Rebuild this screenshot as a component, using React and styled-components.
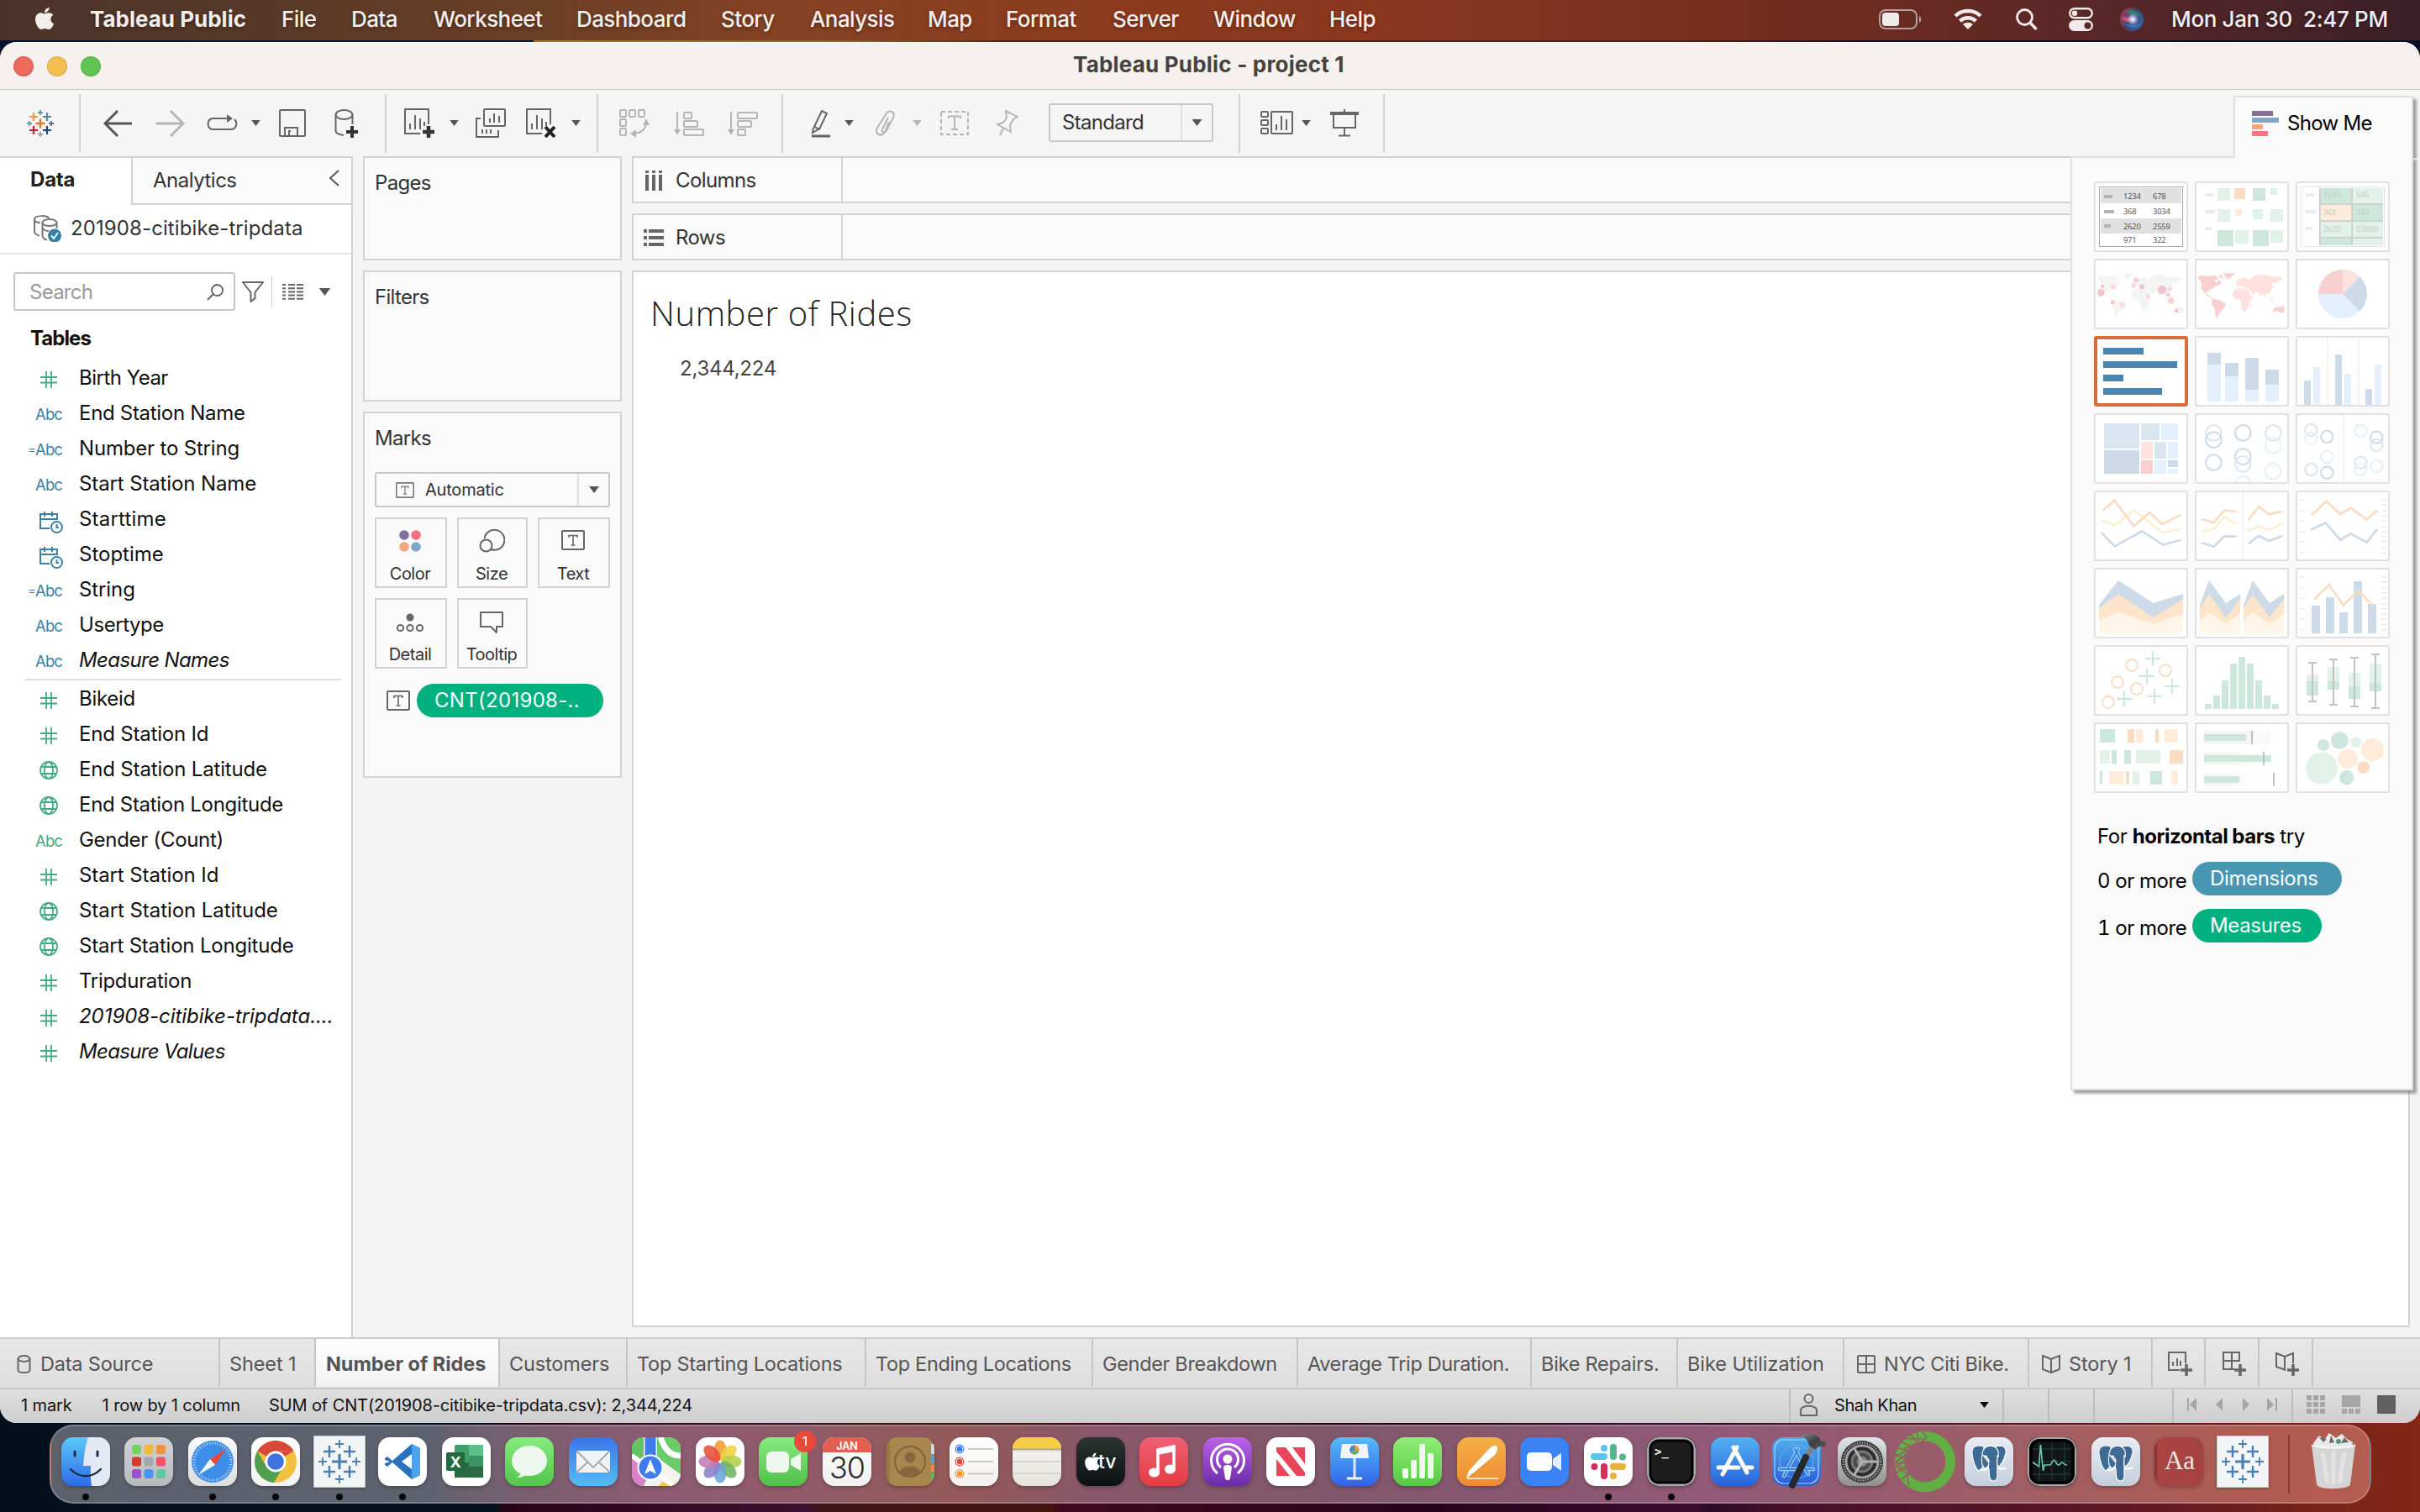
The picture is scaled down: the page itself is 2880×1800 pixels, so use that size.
import React from "react";
import styled, { createGlobalStyle, css } from "styled-components";
import { FaApple } from "react-icons/fa";

const ink = "#333";
const line = "#d3d3d3";
const iconGrey = "#666";
const dimGrey = "#b5b5b5";
const dimension = "#3b83a6";
const measure = "#45ab83";

const GlobalStyle = createGlobalStyle`
  * { box-sizing: border-box; }
  html, body { margin: 0; padding: 0; overflow: hidden; }
  body { font-family: Inter, "Liberation Sans", sans-serif; font-size: 24px; line-height: 30px; letter-spacing: -0.3px; color: ${ink}; }
  svg { display: block; flex: none; }
`;

const Desktop = styled.div`
  width: 2880px;
  height: 1800px;
  display: flex;
  flex-direction: column;
  background:
    linear-gradient(90deg, #04122b 0, #04122b 634px, #a8721c 636px, #9a5f1c 1000px, #5c1a10 1200px, #5c1a10 2000px, #0c0a1c 2250px, #0a1024 2880px) 0 0 / 100% 80px no-repeat,
    linear-gradient(90deg, #02101c 0, #03121c 590px, #280416 600px, #3c1030 960px, #3f1515 980px, #44150f 1250px, #40081c 1262px, #26041a 1700px, #3c0c30 2020px, #2c0a24 2035px, #48102a 2125px, #561526 2450px, #842815 2880px);
`;

/* ---------- macOS menu bar ---------- */
const MenuBar = styled.header`
  height: 48px;
  display: flex;
  align-items: center;
  padding-bottom: 2px;
  color: #f3eeec;
  font-size: 26px;
  font-weight: 500;
  letter-spacing: -0.6px;
  text-shadow: 0 2px 4px rgba(0, 0, 0, 0.35);
  background: linear-gradient(90deg, #4b3329 0, #573928 300px, #6c3f26 640px, #844222 920px, #8c3c1f 1250px, #8a371e 1650px, #7b301f 1980px, #662a22 2300px, #50252a 2620px, #3a1f28 2880px);
`;
const AppleSlot = styled.div`
  width: 107px;
  padding: 0 0 3px 38px;
  font-size: 30px;
  line-height: 0;
`;
const MenuItem = styled.span`
  width: ${(p) => p.$w}px;
  font-weight: ${(p) => (p.$bold ? 700 : 500)};
  letter-spacing: ${(p) => (p.$bold ? 0 : -0.58)}px;
  white-space: pre;
`;
const MenuExtras = styled.div`
  margin-left: auto;
  width: 644px;
  display: flex;
  align-items: center;
  white-space: pre;
`;
const Extra = styled.span`
  width: ${(p) => p.$w}px;
`;
const Clock = styled.span`
  letter-spacing: -0.35px;
`;

/* ---------- window frame ---------- */
const Window = styled.main`
  position: relative;
  margin-top: 2px;
  height: 1644px;
  border-radius: 20px;
  overflow: hidden;
  display: flex;
  flex-direction: column;
  background: #f4f4f4;
`;
const TitleBar = styled.div`
  height: 57px;
  display: flex;
  align-items: center;
  padding-left: 16px;
  background: #f6f1ee;
  border-bottom: 1px solid #cbc8c6;
  border-top: 1px solid #fff;
`;
const Light = styled.i`
  width: 24px;
  height: 24px;
  margin-right: 16px;
  border-radius: 50%;
  background: ${(p) => p.$c};
  border: 1px solid rgba(0, 0, 0, 0.12);
`;
const WindowTitle = styled.h1`
  margin: 0 0 4px 1141px;
  font-size: 26px;
  font-weight: 700;
  letter-spacing: 0.2px;
  color: #454240;
`;

/* ---------- toolbar ---------- */
const Toolbar = styled.div`
  height: 79px;
  display: flex;
  align-items: center;
  background: #f5f5f5;
`;
const ToolGroup = styled.div`
  width: ${(p) => p.$w}px;
  height: 70px;
  display: flex;
  align-items: center;
  border-right: 2px solid ${line};
`;
const Tool = styled.span`
  display: flex;
  margin-left: ${(p) => p.$gap}px;
`;
const FitSelect = styled.div`
  width: 196px;
  height: 46px;
  margin: 0 0 2px 36px;
  display: flex;
  align-items: center;
  border: 2px solid #c8c8c8;
  border-radius: 3px;
  letter-spacing: -0.7px;
`;
const SelectLabel = styled.span`
  flex: 1;
  padding-left: ${(p) => p.$pad || 14}px;
  display: flex;
  align-items: center;
  gap: 13px;
`;
const SelectArrow = styled.span`
  width: 37px;
  height: 100%;
  display: flex;
  align-items: center;
  justify-content: center;
  border-left: 2px solid #e0e0e0;
`;

/* ---------- body ---------- */
const Body = styled.div`
  height: 1406px;
  display: flex;
`;
const Sidebar = styled.aside`
  flex: none;
  width: 420px;
  background: #fff;
  border-top: 2px solid ${line};
  border-right: 2px solid ${line};
`;
const PaneTabs = styled.div`
  height: 56px;
  display: flex;
`;
const DataTab = styled.div`
  width: 156px;
  padding: 11px 0 0 36px;
  font-weight: 700;
  letter-spacing: -0.2px;
  color: #222;
`;
const AnalyticsTab = styled.div`
  flex: 1;
  display: flex;
  justify-content: space-between;
  padding: 12px 14px 0 24px;
  letter-spacing: -0.5px;
  background: #fafafa;
  border-left: 2px solid ${line};
  border-bottom: 2px solid ${line};
`;
const SourceRow = styled.div`
  height: 59px;
  display: flex;
  align-items: center;
  gap: 11px;
  padding: 0 0 2px 40px;
  letter-spacing: 0.1px;
  border-bottom: 2px solid #e4e4e4;
`;
const SearchRow = styled.div`
  display: flex;
  align-items: center;
  height: 46px;
  margin: 21px 0 18px 16px;
`;
const SearchBox = styled.div`
  width: 264px;
  height: 46px;
  display: flex;
  align-items: center;
  justify-content: space-between;
  padding: 1px 12px 0 17px;
  color: #999;
  letter-spacing: -0.75px;
  border: 2px solid #c6c6c6;
  border-radius: 3px;
`;
const SearchDivider = styled.i`
  width: 1px;
  height: 36px;
  margin: 0 12px 0 9px;
  background: #ccc;
`;
const TablesHeading = styled.h2`
  margin: 0 0 11px 36px;
  font-size: 24px;
  line-height: 30px;
  font-weight: 700;
  letter-spacing: -0.95px;
  color: #111;
`;
const FieldList = styled.ul`
  list-style: none;
  margin: 0;
  padding: 0;
`;
const Field = styled.li`
  height: 42px;
  line-height: 42px;
  display: flex;
  align-items: center;
  color: #111;
  white-space: pre;
  ${(p) => p.$italic && css`font-style: italic;`}
  letter-spacing: ${(p) => (p.$ls === undefined ? -0.3 : p.$ls)}px;
`;
const FieldIcon = styled.span`
  width: ${(p) => 74 - (p.$inset || 0)}px;
  margin-right: ${(p) => 20 + (p.$inset || 0)}px;
  display: flex;
  justify-content: flex-end;
  padding-top: ${(p) => p.$drop || 2}px;
  font-style: normal;
  font-size: 18.5px;
  letter-spacing: -0.9px;
  color: ${(p) => p.$c};
`;
const CalcSign = styled.span`
  font-size: 14px;
  letter-spacing: -0.5px;
`;
const FieldDivider = styled.hr`
  height: 2px;
  margin: 1px 12px 1px 30px;
  border: 0;
  background: #dedede;
`;

const CardColumn = styled.section`
  flex: none;
  width: 320px;
  padding-left: 12px;
  display: flex;
  flex-direction: column;
  gap: 12px;
`;
const ShelfCard = styled.div`
  height: ${(p) => p.$h}px;
  padding: 15px 12px 0;
  background: #fafafa;
  border: 2px solid ${line};
  letter-spacing: -0.7px;
`;
const MarkType = styled.div`
  height: 42px;
  margin: 25px 0 12px;
  display: flex;
  align-items: center;
  font-size: 20px;
  letter-spacing: -0.2px;
  border: 2px solid #c8c8c8;
  border-radius: 3px;
`;
const MarkGrid = styled.div`
  display: grid;
  grid-template-columns: 86px 84px 86px;
  grid-auto-rows: 84px;
  gap: 12px;
`;
const MarkButton = styled.div`
  display: flex;
  flex-direction: column;
  align-items: center;
  justify-content: space-between;
  padding: 10px 2px 0 0;
  border: 2px solid ${line};
  font-size: 20px;
  letter-spacing: -0.5px;
`;
const PillRow = styled.div`
  margin: 18px 0 0 14px;
  display: flex;
  align-items: center;
  gap: 8px;
`;
const Pill = styled.span`
  height: 40px;
  width: ${(p) => p.$w}px;
  padding-left: 21px;
  border-radius: 20px;
  background: ${(p) => p.$c};
  color: #fff;
  line-height: 39px;
  letter-spacing: ${(p) => p.$ls}px;
  white-space: nowrap;
`;

const Sheet = styled.section`
  flex: none;
  width: 2116px;
  margin-left: 12px;
  display: flex;
  flex-direction: column;
  gap: 12px;
`;
const Shelf = styled.div`
  height: 56px;
  display: flex;
  background: #fafafa;
  border: 2px solid ${line};
`;
const ShelfLabel = styled.div`
  width: 249px;
  display: flex;
  align-items: center;
  gap: ${(p) => p.$gap}px;
  padding: 1px 0 0 ${(p) => p.$pad}px;
  letter-spacing: -0.6px;
  border-right: 2px solid ${line};
`;
const View = styled.div`
  height: 1258px;
  padding: 22px 0 0 20px;
  background: #fff;
  border: 2px solid ${line};
`;
const ViewTitle = styled.h2`
  margin: 0 0 24px;
  font: 300 40px/54px "Open Sans", "Noto Sans", sans-serif;
  letter-spacing: 0.6px;
  color: #222;
`;
const MarkValue = styled.div`
  padding-left: 35px;
  letter-spacing: -0.25px;
  color: #444;
`;

/* ---------- sheet tabs & status ---------- */
const SheetTabs = styled.nav`
  height: 62px;
  display: flex;
  padding-bottom: 1px;
  background: linear-gradient(#e8e8e8, #dedede);
  border-top: 2px solid #cbcbcb;
  border-bottom: 2px solid #c9c9c9;
`;
const SheetTab = styled.div`
  width: ${(p) => p.$w}px;
  display: flex;
  align-items: center;
  gap: ${(p) => p.$gap || 10}px;
  padding: 2px 0 0 ${(p) => p.$pad || 11}px;
  font-size: 23.5px;
  letter-spacing: ${(p) => (p.$ls === undefined ? -0.33 : p.$ls)}px;
  color: #555;
  white-space: nowrap;
  border-right: 2px solid #c6c6c6;
  ${(p) =>
    p.$active &&
    css`
      padding-left: 12px;
      background: linear-gradient(#fff, #f1f1f1);
      font-weight: 700;
      letter-spacing: -0.05px;
    `}
`;
const StatusBar = styled.footer`
  height: 40px;
  display: flex;
  align-items: center;
  font-size: 20px;
  letter-spacing: -0.12px;
  color: #111;
  background: linear-gradient(#dfdfdf, #cecece);
`;
const StatusText = styled.span`
  margin: 0 0 2px ${(p) => p.$gap}px;
  white-space: pre;
`;
const StatusCell = styled.div`
  width: ${(p) => p.$w}px;
  height: 40px;
  margin-left: ${(p) => (p.$push ? "auto" : 0)};
  padding: 0 0 4px ${(p) => p.$pad || 0}px;
  display: flex;
  align-items: center;
  gap: ${(p) => p.$gap || 0}px;
  border-left: 2px solid #bdbdbd;
`;
const UserName = styled.span`
  width: 152px;
  padding-top: 2px;
  letter-spacing: -0.4px;
`;

/* ---------- Show Me ---------- */
const ShowMe = styled.div`
  position: absolute;
  top: 64px;
  right: 8px;
  display: flex;
  flex-direction: column;
  align-items: flex-end;
  color: #000;
`;
const ShowMeTab = styled.div`
  position: relative;
  z-index: 1;
  width: 214px;
  height: 74px;
  display: flex;
  align-items: center;
  gap: 10px;
  padding: 0 0 10px 20px;
  letter-spacing: -0.7px;
  background: #fafafa;
  border: 2px solid #e0e0e0;
  border-bottom: 0;
  box-shadow: 4px 4px 3px rgba(0, 0, 0, 0.35);
  clip-path: inset(0 -10px 0 0);
`;
const ShowMeBody = styled.div`
  width: 408px;
  height: 1112px;
  margin-top: -2px;
  padding: 28px 26px;
  background: #fafafa;
  border: 2px solid #e0e0e0;
  box-shadow: 4px 4px 3px rgba(0, 0, 0, 0.35);
`;
const ThumbGrid = styled.div`
  display: grid;
  grid-template-columns: repeat(3, 112px);
  grid-auto-rows: 84px;
  gap: 8px;
`;
const Thumb = styled.div`
  background: #fff;
  overflow: hidden;
  border-radius: 3px;
  border: ${(p) => (p.$selected ? "4px solid #de6b37" : "2px solid #e0e0e0")};
`;
const Hint = styled.p`
  margin: 37px 0 15px 4px;
  letter-spacing: -0.4px;
  b { font-weight: 700; letter-spacing: -0.5px; }
`;
const HintRow = styled.div`
  height: 56px;
  margin-left: 4px;
  display: flex;
  align-items: flex-start;
  letter-spacing: -0.4px;
  font-variant-numeric: tabular-nums;
`;
const HintText = styled.span`
  width: 113px;
  padding-top: 8px;
  white-space: nowrap;
`;

/* ---------- dock ---------- */
const DockBar = styled.div`
  width: 2763px;
  height: 94px;
  margin: 2px 0 0 59px;
  padding-left: 3px;
  display: flex;
  border: 2px solid rgba(255, 255, 255, 0.2);
  border-radius: 28px;
  background: linear-gradient(90deg, #5c626c 0, #5d626f 440px, #7a5f70 560px, #8c5b72 720px, #905b69 900px, #935a58 1080px, #8a586a 1230px, #80576a 1520px, #8a5872 1800px, #925a78 1980px, #935a70 2120px, #a05f64 2350px, #ad5c56 2560px, #b45c50 2763px);
`;
const DockSlot = styled.div`
  position: relative;
  flex: none;
  width: 75.515px;
  display: flex;
  flex-direction: column;
  align-items: center;
  padding-top: ${(p) => p.$top || 13}px;
`;
const TrashSlot = styled.div`
  width: 54px;
  padding-top: 7px;
`;
const Tile = styled.div`
  width: 58px;
  height: 58px;
  border-radius: 14px;
  overflow: hidden;
  background: ${(p) => p.$bg};
  box-shadow: 0 2px 4px rgba(0, 0, 0, 0.25);
`;
const SquareTile = styled.div`
  width: 62px;
  height: 62px;
  background: #f2f4f5;
  border: 1px solid #c9cdd1;
  box-shadow: 0 1px 3px rgba(0, 0, 0, 0.3);
`;
const RunningDot = styled.i`
  width: 8px;
  height: 8px;
  margin-top: ${(p) => p.$mt}px;
  border-radius: 50%;
  background: #080608;
`;
const Badge = styled.span`
  position: absolute;
  top: 5px;
  right: -1px;
  width: 26px;
  height: 26px;
  border-radius: 50%;
  background: #e8493a;
  color: #fff;
  font-size: 15px;
  line-height: 26px;
  text-align: center;
`;
const DockDivider = styled.i`
  flex: none;
  width: 2px;
  height: 70px;
  margin: 10px 25px 0 16px;
  background: #85392f;
`;

/* ---------- shared glyphs ---------- */
const Svg = ({ w, h, vb, children, ...rest }) => (
  <svg width={w} height={h} viewBox={vb || `0 0 ${w} ${h}`} fill="none" {...rest}>
    {children}
  </svg>
);
const Caret = ({ c = "#555", w = 12, h = 8 }) => (
  <Svg w={w} h={h} vb="0 0 12 8"><path d="M0 0H12L6 8Z" fill={c} /></Svg>
);
const plusPath = (x, y, s) => `M${x - s} ${y}H${x + s}M${x} ${y - s}V${y + s}`;
const TextGlyph = ({ w = 28, h = 24, c = iconGrey }) => (
  <Svg w={w} h={h} vb="0 0 28 24" stroke={c}>
    <rect x="1" y="1" width="26" height="22" rx="1" strokeWidth="2" />
    <path d="M9 9V6.5H19V9M14 6.5V18M11.5 18H16.5" strokeWidth="1.6" />
  </Svg>
);

/* ---------- toolbar glyphs ---------- */
const TableauMark = () => (
  <Svg w={32} h={32}>
    <path d={plusPath(16, 16, 5.5)} stroke="#e8762d" strokeWidth="2.4" />
    <path d={plusPath(8, 8, 5)} stroke="#ee9a3d" strokeWidth="2.2" />
    <path d={plusPath(24, 8, 5)} stroke="#5b879b" strokeWidth="2.2" />
    <path d={plusPath(8, 24, 5)} stroke="#c72035" strokeWidth="2.2" />
    <path d={plusPath(24, 24, 5)} stroke="#1f447c" strokeWidth="2.2" />
    <path d={plusPath(16, 3, 3)} stroke="#7099a6" strokeWidth="1.8" />
    <path d={plusPath(3, 16, 3)} stroke="#7099a6" strokeWidth="1.8" />
    <path d={plusPath(29, 16, 3)} stroke="#5c6692" strokeWidth="1.8" />
    <path d={plusPath(16, 29, 3)} stroke="#9a96c0" strokeWidth="1.8" />
  </Svg>
);
const Arrow = ({ c, flip }) => (
  <Svg w={34} h={32}>
    <path transform={flip ? "translate(34 0) scale(-1 1)" : undefined} d="M17 1L2 16L17 31M2 16H34" stroke={c} strokeWidth="3" />
  </Svg>
);
const Cycle = () => (
  <Svg w={40} h={22} stroke={iconGrey} strokeWidth="2">
    <path d="M8 5A7 7 0 0 0 8 18H32A7 7 0 0 0 35 6M8 5H28" />
    <path d="M26 0L33 5L26 10Z" fill={iconGrey} stroke="none" />
  </Svg>
);
const Save = () => (
  <Svg w={32} h={33} stroke={iconGrey} strokeWidth="2">
    <rect x="1" y="1" width="30" height="31" rx="1" /><path d="M7 32V22H22V32M12 32V26H14" />
  </Svg>
);
const AddData = () => (
  <Svg w={29} h={34} stroke={iconGrey} strokeWidth="2">
    <ellipse cx="11.5" cy="6.5" rx="10" ry="5.5" /><path d="M1.500 6.500V26C1.500 28.500 5 30 11 31M21.500 6.500V18" />
    <path d={plusPath(21, 27, 7)} stroke="#333" strokeWidth="4" />
  </Svg>
);
const SheetGlyph = ({ mark }) => (
  <Svg w={38} h={37} stroke={iconGrey} strokeWidth="2">
    <path d="M20 31H2V2H30V20M8 26V19M14 26V9M20 26V13M25 22V17" />
    {mark === "add" && <path d={plusPath(30, 29, 7)} stroke="#333" strokeWidth="4.500" />}
    {mark === "clear" && <path d="M24 23L35 35M35 23L24 35" stroke="#222" strokeWidth="4" />}
  </Svg>
);
const Duplicate = () => (
  <Svg w={36} h={35} stroke={iconGrey} strokeWidth="2">
    <rect x="10" y="1" width="25" height="20" rx="1" /><path d="M17 17V12M22 17V6M28 17V9M6 12H1V34H27V26M8 30V25M13 30V25M18 30V25" />
  </Svg>
);
const Swap = () => (
  <Svg w={36} h={36} stroke={dimGrey} strokeWidth="2">
    <rect x="1" y="2" width="7" height="8" rx="1" /><rect x="12" y="2" width="7" height="8" rx="1" /><rect x="23" y="2" width="7" height="8" rx="1" />
    <rect x="1" y="13" width="7" height="8" rx="1" /><rect x="1" y="24" width="7" height="8" rx="1" />
    <path d="M32 16C32 25 26 29 18 30" /><path d="M32 12L36 20H28ZM13 30L20 25V35Z" fill={dimGrey} stroke="none" />
  </Svg>
);
const SortGlyph = ({ widths }) => (
  <Svg w={37} h={30} stroke={dimGrey} strokeWidth="2">
    <path d="M4 1V26" /><path d="M0 22H8L4 29Z" fill={dimGrey} stroke="none" />
    {widths.map((w, i) => <rect key={i} x="12" y={2 + i * 10} width={w} height="7" rx="1" />)}
  </Svg>
);
const Highlighter = () => (
  <Svg w={24} h={34} stroke={iconGrey} strokeWidth="2">
    <path d="M4 21L13 2L19 5L10 24ZM3 22L2 28L9 24" /><path d="M1 32H23" strokeWidth="3" />
  </Svg>
);
const Clip = () => (
  <Svg w={25} h={31} stroke={dimGrey} strokeWidth="2">
    <path d="M16 9L9 23C7.500 27 12 28 13.500 25L22 9C25 2 17 -1 14 4L3 21C0 27 5 31 9 29C11 28 12 26 13 24L17 14" />
  </Svg>
);
const LabelBox = () => (
  <Svg w={34} h={29} stroke={dimGrey} strokeWidth="2">
    <rect x="1" y="1" width="32" height="27" strokeDasharray="5 3" /><path d="M10 9V6.500H24V9M17 6.500V22M13 22H21" />
  </Svg>
);
const Pin = () => (
  <Svg w={26} h={31} stroke={dimGrey} strokeWidth="2">
    <path d="M11 1L25 8L20 11L16 18L17 26L1 17L8 15L12 9ZM8 22L4 30" />
  </Svg>
);
const ShowCards = () => (
  <Svg w={39} h={29} stroke={iconGrey} strokeWidth="2">
    <rect x="1" y="1" width="8" height="6" rx="1" /><rect x="1" y="11" width="8" height="6" rx="1" /><rect x="1" y="21" width="8" height="6" rx="1" />
    <rect x="13" y="1" width="25" height="26" rx="1" /><path d="M19 23V16M25 23V6M31 23V10" />
  </Svg>
);
const Present = () => (
  <Svg w={34} h={33} stroke={iconGrey} strokeWidth="2">
    <path d="M0 5H34" strokeWidth="4" /><path d="M17 0V3M4 6V22H30V6M17 22V31M10 31.500H24" />
  </Svg>
);

/* ---------- sidebar glyphs ---------- */
const SourceGlyph = () => (
  <Svg w={33} h={32} stroke="#777" strokeWidth="2">
    <path d="M1 5V20C1 22 4 24 7 24.500M1 5C1 0 18 0 18 4M1 5C1 8 5 9 8 9" /><ellipse cx="19" cy="9" rx="8.500" ry="4" /><path d="M10.500 9V24C10.500 27 13 29 16 29.500M27.500 9V16M11 16C13 19 16 19 18 19" />
    <circle cx="25" cy="24.500" r="8" fill="#347fa3" stroke="none" /><path d="M21 24.500L24 28L29 21" stroke="#fff" />
  </Svg>
);
const Hash = () => (
  <Svg w={20} h={20} stroke={measure} strokeWidth="1.800"><path d="M7 0V20M13 0V20M0 7H20M0 13.500H20" /></Svg>
);
const Globe = () => (
  <Svg w={22} h={22} stroke={measure} strokeWidth="1.800"><circle cx="11" cy="11" r="10" /><ellipse cx="11" cy="11" rx="5" ry="10" /><path d="M2 7H20M2 15H20" /></Svg>
);
const Calendar = () => (
  <Svg w={28} h={26} stroke={dimension} strokeWidth="2">
    <path d="M12 20H1V3H21V10M1 9H21M6 0V6M15 0V6" /><circle cx="20.500" cy="18.500" r="6.500" /><path d="M20.500 15V19H23" />
  </Svg>
);
const fieldIcon = {
  num: <FieldIcon $c={measure} $inset={6} $drop={3}><Hash /></FieldIcon>,
  geo: <FieldIcon $c={measure} $inset={5}><Globe /></FieldIcon>,
  date: <FieldIcon $c={dimension} $inset={-1} $drop={7}><Calendar /></FieldIcon>,
  abc: <FieldIcon $c={dimension}>Abc</FieldIcon>,
  calc: <FieldIcon $c={dimension}><CalcSign>=</CalcSign>Abc</FieldIcon>,
  abcm: <FieldIcon $c={measure}>Abc</FieldIcon>,
};
const dimensions = [
  ["num", "Birth Year", false, -0.5], ["abc", "End Station Name"], ["calc", "Number to String", false, -0.18], ["abc", "Start Station Name", false, -0.12],
  ["date", "Starttime", false, 0.2], ["date", "Stoptime", false, 0], ["calc", "String", false, -0.1], ["abc", "Usertype", false, -0.45], ["abc", "Measure Names", true, -0.6],
];
const measures = [
  ["num", "Bikeid"], ["num", "End Station Id", false, -0.2], ["geo", "End Station Latitude", false, -0.17], ["geo", "End Station Longitude"],
  ["abcm", "Gender (Count)"], ["num", "Start Station Id", false, -0.1], ["geo", "Start Station Latitude", false, -0.06], ["geo", "Start Station Longitude", false, -0.2],
  ["num", "Tripduration"], ["num", "201908-citibike-tripdata....", true, -0.05], ["num", "Measure Values", true, -0.65],
];
const Fields = ({ items }) => (
  <FieldList>
    {items.map(([icon, name, italic, ls]) => (
      <Field key={name} $italic={italic} $ls={ls}>{fieldIcon[icon]}{name}</Field>
    ))}
  </FieldList>
);

/* ---------- Show Me thumbnails ---------- */
const R = ({ b, c }) => <rect x={b[0]} y={b[1]} width={b[2]} height={b[3]} fill={c} />;
const Rects = ({ list }) => list.map((r, i) => <R key={i} b={r} c={r[4]} />);
const Rings = ({ list, r, w = 6 }) => list.map(([x, y, c], i) => <circle key={i} cx={x} cy={y} r={r} stroke={c} strokeWidth={w} />);
const Dots = ({ list }) => list.map(([x, y, r, c], i) => <circle key={i} cx={x} cy={y} r={r} fill={c} />);
const Line = ({ p, c }) => <polyline points={p} stroke={c} strokeWidth="8" strokeLinecap="round" />;
const LG = "#e2f2e8", DG = "#cde7dc", OR = "#fadcc2", LO = "#feebd9", DB = "#cddae7", MB = "#d9e6f0", LB = "#e4f1fc", YE = "#fdf0d5", DP = "#f7d0cf", LP = "#ffe1e0";

const Ticks = ({ y }) => (
  <>
    {[0, 39, 75, 114, 150, 189].map((d) => <rect key={d} x="891" y={y + d - 3} width="18" height="6" fill="#f0f0f0" />)}
    {[0, 18, 39, 57, 75, 96, 114, 132, 150, 171, 189].map((d) => <rect key={d} x="1182" y={y + d - 3} width="18" height="6" fill="#f0f0f0" />)}
  </>
);
const Nums = ({ rows, c }) => rows.map(([t, x, y], i) => (
  <text key={i} x={x} y={y} fontFamily="Open Sans, Noto Sans, sans-serif" fontSize="28" fill={c} letterSpacing="-0.5">{t}</text>
));
const americas = "M528 448L540 444L560 446L590 444L594 448L600 456L588 462L592 470L604 460L612 468L602 478L588 482L576 492L566 496L570 503L560 500L556 508L562 512L574 522L582 528L600 530L628 545L618 562L608 576L600 584L597 599L590 588L588 564L576 546L579 528L560 516L548 502L538 488L541 468L530 458ZM600 446L608 440L618 456L610 454ZM618 436L661 436L648 448L634 458L624 448Z";
const oceania = "M794 572L800 562L812 555L822 557L830 548L838 566L830 580L818 574L808 570L796 576Z";
const eurasia = "M660 484L668 480L664 466L672 458L682 452L694 450L706 460L730 444L750 440L770 444L800 449L830 452L824 462L810 464L808 478L802 468L790 472L798 486L786 496L780 514L774 506L768 510L772 522L762 514L757 508L748 522L742 505L733 502L726 512L714 500L708 494L698 490L686 484L674 480L666 487ZM652 502L666 490L688 490L708 498L714 516L725 517L714 532L710 552L700 568L690 576L684 566L682 546L676 530L660 528L650 516ZM716 552L724 546L720 562ZM776 528L792 542L802 548M784 522L796 528L792 538Z";
const bands = (x0, xs) => ({
  blue: `M${x0} 450L${xs[0]} 363L${xs[1]} 444L${xs[2]} 411V552H${x0}Z`,
  orange: `M${x0} 462L${xs[0]} 412L${xs[1]} 495L${xs[2]} 430V552H${x0}Z`,
  cream: `M${x0} 507L${xs[0]} 476L${xs[1]} 518L${xs[2]} 482V552H${x0}Z`,
});
const Area = ({ x0, xs }) => {
  const a = bands(x0, xs);
  return (<><path d={a.blue} fill={DB} /><path d={a.orange} fill="#fde5cb" /><path d={a.cream} fill="#fff5e8" /></>);
};

const thumbs = [
  [156, 108, <>
    <rect x="175.500" y="127.500" width="297" height="213" stroke="#aaa" strokeWidth="3" />
    <Rects list={[[180, 132, 288, 54, "#e0e0e0"], [180, 240, 288, 54, "#e0e0e0"], [192, 156, 30, 12, "#b3b3b3"], [192, 210, 36, 12, "#b3b3b3"], [192, 261, 24, 12, "#b3b3b3"]]} />
    <Nums c="#4a4a4a" rows={[["1234", 261, 170], ["678", 366, 170], ["368", 261, 224], ["3034", 366, 224], ["2620", 261, 278], ["2559", 366, 278], ["971", 261, 326], ["322", 366, 326]]} />
  </>],
  [516, 108, <Rects list={[
    [552, 150, 30, 12, "#ebebeb"], [552, 210, 36, 12, "#ebebeb"], [552, 270, 24, 12, "#ebebeb"],
    [597, 132, 45, 45, LG], [657, 132, 39, 39, OR], [723, 132, 45, 45, DG], [786, 132, 24, 24, LG],
    [597, 207, 45, 45, LG], [660, 207, 24, 24, LO], [723, 207, 36, 36, LG], [786, 207, 45, 45, LG],
    [597, 282, 57, 57, DG], [660, 282, 48, 48, LG], [723, 282, 57, 57, DG], [786, 282, 45, 45, LG]]} />],
  [876, 108, <>
    <rect x="895.500" y="127.500" width="297" height="213" stroke="#e6e6e6" strokeWidth="3" />
    <Rects list={[[912, 150, 30, 12, "#ebebeb"], [912, 210, 36, 12, "#ebebeb"], [912, 270, 24, 12, "#ebebeb"], [960, 132, 228, 204, "#d0d0d0"],
      [966, 132, 108, 54, DG], [1080, 132, 108, 54, LG], [966, 192, 108, 54, LO], [1080, 192, 108, 54, DG],
      [966, 252, 108, 54, LG], [1080, 252, 108, 54, LG], [966, 312, 108, 24, DG], [1080, 312, 108, 24, LG]]} />
    <Nums c="#c3cbc6" rows={[["1234", 974, 165], ["546", 1091, 165], ["368", 974, 228], ["340", 1091, 228], ["2620", 974, 288], ["53890", 1091, 288]]} />
  </>],
  [156, 384, <>
    <g transform="translate(-360 0)"><path d={americas} fill="#f4f4f4" /><path d={eurasia} fill="#f4f4f4" /><path d={oceania} fill="#f4f4f4" /></g>
    <Dots list={[[181, 505, 13, "#ecc4ca"], [187, 483, 6.5, "#ecc4ca"], [225, 484, 9.5, "#fddcdc"], [223, 540, 7, "#eac0c6"], [258, 549, 9.5, "#fddcdc"],
      [306, 460, 9.5, DP], [297, 480, 9.5, "#fddcdc"], [327, 484, 9.5, "#ecc4ca"], [349, 519, 6.5, DP], [399, 495, 15, "#ecc4ca"],
      [427, 492, 7, DP], [421, 513, 7, "#ecc4ca"], [431, 534, 11.5, DP], [451, 570, 7, "#ecc4ca"]]} />
  </>],
  [516, 384, <><path d={americas} fill={DP} /><path d={eurasia} fill={LP} /><path d={oceania} fill={DP} /></>],
  [876, 384, <>
    <circle cx="1044" cy="510" r="87" fill={LB} />
    <path d="M1044 510H957A87 87 0 0 1 1044 423Z" fill={DP} /><path d="M1044 510V423A87 87 0 0 1 1105.500 448.500Z" fill={LP} />
    <path d="M1044 510L1105.500 448.500A87 87 0 0 1 1105.500 571.500Z" fill={DB} />
  </>],
  [156, 660, <Rects list={[[189, 702, 144, 24, "#4e84ae"], [189, 750, 264, 24, "#4e84ae"], [189, 798, 72, 24, "#4e84ae"], [189, 846, 210, 24, "#4e84ae"]]} />],
  [516, 660, <Rects list={[[561, 720, 48, 42, DB], [561, 762, 48, 132, LB], [624, 756, 48, 48, DB], [624, 804, 48, 90, LB], [696, 738, 48, 114, DB], [696, 852, 48, 42, LB], [768, 780, 48, 54, DB], [768, 834, 48, 60, LB]]} />],
  [876, 660, <Rects list={[[987, 660, 6, 252, "#f2f2f2"], [1098, 660, 6, 252, "#f2f2f2"], [906, 819, 24, 90, DB], [939, 771, 24, 140, LB], [1017, 726, 24, 190, DB], [1050, 795, 24, 120, LB], [1125, 849, 24, 60, DB], [1158, 762, 24, 150, LB]]} />],
  [156, 936, <Rects list={[[192, 972, 126, 90, MB], [192, 1068, 126, 84, DB], [324, 972, 66, 60, MB], [396, 972, 60, 60, LB], [324, 1038, 42, 60, "#ffe3e0"], [372, 1038, 42, 60, MB], [420, 1038, 36, 60, LB], [324, 1104, 42, 48, DP], [372, 1104, 42, 48, LB], [420, 1104, 36, 24, DB], [420, 1134, 36, 18, LB]]} />],
  [516, 936, <Rings r={28} list={[[583, 1006, MB], [583, 1031, DB], [583, 1112, DB], [688, 1006, DB], [688, 1091, DB], [688, 1117, MB], [688, 1190, LB], [796, 1006, MB], [795, 1051, LB], [795, 1143, LB]]} />],
  [876, 936, <><R b={[1044, 936, 6, 252]} c="#f2f2f2" /><Rings r={21.5} list={[[931, 996, MB], [931, 1026, LB], [988, 1020, DB], [988, 1092, LB], [931, 1137, MB], [988, 1148, DB], [1108, 999, LB], [1165, 1022, DB], [1165, 1050, MB], [1108, 1112, MB], [1108, 1137, LB], [1165, 1125, LB]]} /></>],
  [156, 42, <><Line c={YE} p="185,149 230,166 298,113 402,193 463,180" /><Line c={OR} p="190,111 229,77 298,168 355,121 400,162 463,130" /><Line c={DB} p="184,194 230,241 328,187 402,236 463,219" /></>],
  [516, 42, <><R b={[684, 42, 6, 252]} c="#f2f2f2" /><Line c={OR} p="542,145 584,156 622,113 662,117" /><Line c={YE} p="542,187 584,179 624,135 660,162" /><Line c={DB} p="543,229 584,242 620,206 662,206" /><Line c={OR} p="709,145 745,99 781,127 826,117" /><Line c={YE} p="705,186 744,170 785,183 827,157" /><Line c={DB} p="710,230 744,204 782,222 826,205" /></>],
  [876, 42, <><Ticks y={75} /><Line c={OR} p="935,128 985,80 1036,126 1073,104 1130,146 1164,115" /><Line c={DB} p="933,181 983,157 1036,219 1073,196 1130,227 1165,182" /></>],
  [156, 318, <Area x0={174} xs={[243, 368, 474]} />],
  [516, 318, <><Area x0={534} xs={[567, 627, 678]} /><Area x0={690} xs={[723, 783, 834]} /></>],
  [876, 318, <><Ticks y={351} /><Rects list={[[933, 453, 30, 99, DB], [984, 423, 30, 129, DB], [1032, 477, 30, 75, DB], [1083, 366, 30, 186, DB], [1134, 447, 30, 105, DB]]} /><Line c={OR} p="944,429 996,378 1046,452 1099,400 1151,451" /></>],
  [156, 594, <><Rings r={21} w={5.5} list={[[291, 666, OR], [411, 684, OR], [240, 726, OR], [309, 750, OR], [207, 798, OR]]} />{[[366, 642], [345, 705], [435, 741], [264, 786], [372, 777]].map(([x, y]) => <path key={x} d={plusPath(x, y, 27)} stroke={DG} strokeWidth="6" />)}</>],
  [516, 594, <Rects list={[804, 774, 720, 660, 636, 660, 720, 774, 804].map((y, i) => [552 + i * 30, y, 24, 822 - y, DG])} />],
  [876, 594, <>{[[915, 699, 723, 774, 657, 795], [990, 672, 723, 753, 645, 807], [1065, 693, 741, 786, 639, 813], [1140, 660, 729, 759, 627, 819]].map(([x, a, b, c, t, e]) => (
    <g key={x}><R b={[x, a, 42, b - a]} c={LG} /><R b={[x, b, 42, c - b]} c={DG} /><path d={`M${x + 21} ${t}V${e}M${x + 6} ${t}H${x + 36}M${x + 6} ${e}H${x + 36}`} stroke="#c2c2c2" strokeWidth="6" /></g>
  ))}</>],
  [156, 870, <Rects list={[[177, 54, DG, 0], [276, 24, OR, 0], [306, 24, LO, 0], [375, 12, OR, 0], [408, 48, LO, 0], [177, 36, LG, 1], [219, 18, DG, 1], [264, 24, DG, 1], [306, 87, LG, 1], [426, 48, OR, 1], [177, 9, DG, 2], [210, 51, LO, 2], [270, 12, OR, 2], [294, 24, LG, 2], [357, 42, DG, 2], [432, 24, LO, 2]].map(([x, w, c, r]) => [x, 894 + r * 75, w, 48, c])} />],
  [516, 870, <Rects list={[[900, 729, 786, 699, 717], [975, 669, 723, 789, 759], [1050, 651, 699, 675, 795]].flatMap(([y, a, b, bar, tick]) => [[549, y, 285, 48, "#fcfffe"], [549, y, b - 549, 48, "#fafafa"], [549, y, a - 549, 48, "#f5f5f5"], [549, y + 12, bar - 549, 24, DG], [tick, y, 6, 48, "#c2c2c2"]])} />],
  [876, 870, <Dots list={[[969, 1034, 57, LG], [975, 951, 21, DG], [1033, 935, 31, DG], [1091, 941, 19, LG], [1150, 968, 41, LO], [1062, 1000, 35, LO], [1118, 1031, 22, OR], [1058, 1067, 26, DG]]} />],
];

/* ---------- sheet tab glyphs ---------- */
const tabStroke = { stroke: "#666", strokeWidth: 2 };
const Cylinder = () => (
  <Svg w={17} h={22} {...tabStroke}><ellipse cx="8.500" cy="4.500" rx="7" ry="3.500" /><path d="M1.500 4.500V18C1.500 22 15.500 22 15.500 18V4.500" /></Svg>
);
const DashGlyph = () => (
  <Svg w={22} h={22} {...tabStroke}><rect x="1" y="1" width="20" height="20" rx="1" /><path d="M11 1V21M1 11H21" /></Svg>
);
const BookGlyph = () => (
  <Svg w={22} h={23} {...tabStroke}><path d="M1 2L11 6L21 2V18L11 22L1 18ZM11 6V22" /></Svg>
);
const NewSheet = () => (
  <Svg w={29} h={30} {...tabStroke}><path d="M14 22H1V1H21V14M6 17V12M11 17V8M15 17V11" /><path d={plusPath(22, 22, 7)} strokeWidth="3.500" /></Svg>
);
const NewDash = () => (
  <Svg w={29} h={30} {...tabStroke}><path d="M14 21H1V1H20V12M1 11H20M11 1V21" /><path d={plusPath(21, 22, 7)} strokeWidth="3.500" /></Svg>
);
const NewStory = () => (
  <Svg w={29} h={30} {...tabStroke}><path d="M12 22L1 18V2L11 6L21 2V14M11 6V21" /><path d={plusPath(21, 22, 7)} strokeWidth="3.500" /></Svg>
);

/* ---------- dock glyphs ---------- */
const G = ({ children }) => <Svg w={58} h={58}>{children}</Svg>;
const TableauTile = () => (
  <SquareTile>
    <Svg w={60} h={60} stroke="#4c7fb0">
      <path d={plusPath(30, 30, 9)} strokeWidth="3.200" />
      <path d={[[18, 18], [42, 18], [18, 42], [42, 42]].map(([x, y]) => plusPath(x, y, 7)).join("")} strokeWidth="2.400" />
      <path d={[[30, 9], [30, 51], [10, 30], [50, 30]].map(([x, y]) => plusPath(x, y, 5)).join("")} strokeWidth="1.800" />
    </Svg>
  </SquareTile>
);
const ChromeIcon = () => (
  <G>
    <circle cx="29" cy="29" r="25" fill="#f3c13f" />
    <path d="M29 29L7.400 16.500A25 25 0 0 1 50.600 16.500H29Z" fill="#d9493a" />
    <path d="M29 29L50.600 16.500 28 17Z" fill="#d9493a" />
    <path d="M7.400 16.500A25 25 0 0 0 27 54L38 35 29 29 18 35Z" fill="#4f9e52" />
    <circle cx="29" cy="29" r="12.500" fill="#fff" /><circle cx="29" cy="29" r="9.800" fill="#4071e0" />
  </G>
);
const petals = ["#f29a37", "#f0d23c", "#b5cf4a", "#6fb562", "#6ca5d8", "#8a7fc9", "#c57bb5", "#e8503c"];
const SystemGear = () => (
  <G>
    <circle cx="29" cy="29" r="25" fill="#2b2b2d" /><circle cx="29" cy="29" r="22.500" stroke="#9a9a9a" strokeWidth="2.500" strokeDasharray="1.600 1.400" />
    <circle cx="29" cy="29" r="19" stroke="#a2a2a2" strokeWidth="3" /><circle cx="29" cy="29" r="12" fill="#4c4c4c" stroke="#777" strokeWidth="3" /><circle cx="29" cy="29" r="6" fill="#8b8b8b" />
    <path d="M29 29H47M29 29L20 13.400M29 29L20 44.600" stroke="#b2b2b2" strokeWidth="3" />
  </G>
);
const Elephant = () => (
  <G>
    <g fill="#3f6a95" stroke="#fff" strokeWidth="1.200" strokeLinejoin="round">
      <path d="M23 11C13 8 8 12 9 20C10 28 13 38 17 40C19 39 21 36 23 34Z" />
      <path d="M37 11C46 8 50 13 49 19C47 27 43 34 39 36Z" />
      <path d="M21 21C21 14 26 10 31 10.500C38 10 42 17 39.500 23C38 28 39 31 39 34V46C39 54 30 54 29.500 46L29 38C27 35 29 30 29 28C28 24 24 22 21 21Z" />
      <path d="M21 21C20 27 20 33 23 36C26 38 28 35 29 32" />
    </g>
    <path d="M19 38.500C23 40 26 39 28 35M40 36C42 38.500 46 38 49 36" stroke="#fff" strokeWidth="2.200" />
    <path d="M24 22.500H27M41 22.500H38" stroke="#fff" strokeWidth="1.600" />
  </G>
);
const AppStoreA = ({ c = "#fff", w = 5 }) => (
  <path d="M31 12L19 34M27 12L43 42M9 36H33M40 36H49M17 39L14 44" stroke={c} strokeWidth={w} strokeLinecap="round" />
);

const icons = [
  ["linear-gradient(#5ac8fa,#2f6bea)", <G><path d="M32 0H58V58H36C35 50 34.500 44 35 34H26C27 20 29 8 32 0Z" fill="#e3e9f2" /><path d="M16 17V22M43 17V22" stroke="#1b2c4a" strokeWidth="3" strokeLinecap="round" /><path d="M11 38C22 49 36 49 47 38" stroke="#1b2c4a" strokeWidth="2.400" strokeLinecap="round" /></G>, 1],
  ["linear-gradient(#d0d2d6,#b8babf)", <G>{["#72d65c", "#f0b93e", "#ee9440", "#d8382f", "#a5a9ad", "#ef5368", "#9b52d0", "#4a94f5", "#5fc9a5"].map((c, i) => <rect key={i} x={9 + (i % 3) * 14.500} y={9 + Math.floor(i / 3) * 14.500} width="11" height="11" rx="3" fill={c} />)}</G>],
  ["linear-gradient(#fbfbfb,#dcdcdc)", <G><circle cx="29" cy="29" r="25" fill="#3c8ee8" /><circle cx="29" cy="29" r="22" stroke="#bfe0ff" strokeWidth="3" strokeDasharray="1 2.200" /><path d="M46 13L32 33L26 26Z" fill="#e5483c" /><path d="M12 45L26 26L32 33Z" fill="#f4f4f4" /></G>, 1],
  ["linear-gradient(#fff,#f2f2f2)", <ChromeIcon />, 1],
  ["tableau", null, 1],
  ["#fff", <G><path d="M40 8L50 13V45L40 50L17 30L11 35L8 33V31L14 29L8 27V25L11 23L17 28ZM40 20L28 29L40 38Z" fill="#2a72bd" fillRule="evenodd" /><path d="M40 8L50 13V45L40 50Z" fill="#4aa5ee" /></G>, 1],
  ["#fff", <G><rect x="15" y="9" width="34" height="39" rx="2" fill="#3fa06a" /><rect x="32" y="9" width="17" height="13" fill="#5cc08a" /><rect x="15" y="30" width="34" height="18" fill="#2b6a43" /><rect x="32" y="22" width="17" height="13" fill="#3a9360" /><rect x="5" y="18" width="22" height="22" rx="2" fill="#1e6b3f" /><text x="16" y="36" fontSize="18" fontWeight="700" textAnchor="middle" fill="#fff">X</text></G>],
  ["linear-gradient(#86ec7e,#52c44d)", <G><ellipse cx="29" cy="28" rx="21" ry="18" fill="#eef8ee" /><path d="M19 40C19 45 16 47 14 48C20 48 24 46 26 43Z" fill="#eef8ee" /></G>],
  ["linear-gradient(#3a74ec,#55bdf3)", <G><rect x="9" y="16" width="40" height="26" rx="3" fill="#f1f2f3" /><path d="M10 17L29 36L48 17M10 41L23 29M48 41L35 29" stroke="#a5a8ab" strokeWidth="1.800" /></G>],
  ["#f2f2ef", <G><path d="M0 0H14V30L0 20Z" fill="#62c363" /><path d="M30 0H58V44L30 24Z" fill="#6acb68" /><path d="M0 22L20 44L14 58H0Z" fill="#d982c9" /><path d="M40 48L58 58H32Z" fill="#f3cc4e" /><path d="M34 0C40 18 48 22 58 22" stroke="#fff" strokeWidth="7" /><path d="M22 0V30" stroke="#3e7bee" strokeWidth="13" /><path d="M0 22L50 58" stroke="#fff" strokeWidth="6" /><circle cx="22" cy="36" r="14.500" fill="#3e7bee" stroke="#fff" strokeWidth="2" /><path d="M22 26L29 44L22 40L15 44Z" fill="#fff" /></G>],
  ["#fff", <G>{petals.map((c, i) => <ellipse key={i} cx="29" cy="15.500" rx="7.500" ry="12" fill={c} opacity="0.88" transform={`rotate(${i * 45} 29 29)`} />)}</G>],
  ["linear-gradient(#86ec7e,#4fc04a)", <G><rect x="9" y="17" width="27" height="25" rx="6" fill="#eef8ee" /><path d="M38 26L50 19V40L38 33Z" fill="#eef8ee" /></G>, 0, "1"],
  ["linear-gradient(#fff,#f1f0ee)", <G><rect width="58" height="18" fill="#e35f52" /><text x="29" y="14.500" fontSize="12.500" fontWeight="600" textAnchor="middle" fill="#fff" letterSpacing="0">JAN</text><text x="29" y="48.500" fontSize="36" fontWeight="300" textAnchor="middle" fill="#2c2c2c" letterSpacing="-1">30</text></G>],
  ["linear-gradient(90deg,#8c6b3c,#a98850 12%,#a8854c)", <G><circle cx="29" cy="29" r="18" stroke="#80623a" strokeWidth="2" /><circle cx="29" cy="24" r="6.500" fill="#866740" /><path d="M17 42C17 32 41 32 41 42C35 48 23 48 17 42Z" fill="#866740" /><path d="M56 8V20" stroke="#d9d9d9" strokeWidth="4" /><path d="M56 22V31" stroke="#4fa5dc" strokeWidth="4" /><path d="M56 33V41" stroke="#ef8d36" strokeWidth="4" /><path d="M56 42V50" stroke="#57bb5c" strokeWidth="4" /></G>],
  ["linear-gradient(#fff,#f1f0ee)", <G><path d="M22 14H52M22 29H52M22 43.500H52" stroke="#bbb" strokeWidth="1.600" />{[["#3478f6", 14], ["#e5453a", 29], ["#f0962f", 43.5]].map(([c, y]) => <g key={c}><circle cx="12" cy={y} r="4.800" stroke={c} strokeWidth="1.200" /><circle cx="12" cy={y} r="3.200" fill={c} /></g>)}</G>],
  ["linear-gradient(#f8f7f3,#e4e3de)", <G><rect width="58" height="14" fill="#f5cd44" /><path d="M0 14.500H58" stroke="#a8a69c" strokeWidth="1.800" /><path d="M0 17.500H58" stroke="#c6c4bc" strokeDasharray="1 2" /><path d="M0 29H58M0 43H58" stroke="#d2d0ca" strokeWidth="1.400" /></G>],
  ["linear-gradient(#2a3531,#0c1112)", <G><FaApple x="7" y="17" width="20" height="21" color="#fff" /><text x="26" y="37" fontSize="23" fontWeight="500" fill="#fff" letterSpacing="0">tv</text></G>],
  ["linear-gradient(#ee6075,#e53c42)", <G><path d="M22 42V15L41 11V37" stroke="#fff" strokeWidth="3.500" /><path d="M21 14L42.500 9.500V17L21 21Z" fill="#fff" /><ellipse cx="17.500" cy="42" rx="6.500" ry="5.500" fill="#fff" /><ellipse cx="36.500" cy="38" rx="6.500" ry="5.500" fill="#fff" /></G>],
  ["linear-gradient(#bb62e8,#6b2ba8)", <G><path d="M17 43A19.500 19.500 0 1 1 41 43M21 36A12.500 12.500 0 1 1 37 36" stroke="#fff" strokeWidth="3" /><circle cx="29" cy="26" r="5.500" fill="#fff" /><path d="M24 36C24 32 34 32 34 36L32 49C31 52 27 52 26 49Z" fill="#fff" /></G>],
  ["#fff", <G><path d="M12 12H23L46 42V46H36L12 17Z" fill="#e8465a" /><path d="M31 12H46V32Z" fill="#e8465a" /><path d="M12 26L28 46H12Z" fill="#e8465a" /></G>],
  ["linear-gradient(#56bdf7,#3063e8)", <G><path d="M14 8H44L46 25H12Z" fill="#f0f3f7" /><path d="M29 25V48" stroke="#e3e8ee" strokeWidth="3" /><path d="M20 49H38" stroke="#f0f3f7" strokeWidth="3" /><circle cx="29" cy="15" r="5.500" fill="#e9973e" /><path d="M29 15V9.500A5.500 5.500 0 0 0 25 19Z" fill="#4b84d6" /><path d="M29 15L34 17A5.500 5.500 0 0 1 25 19Z" fill="#55b66a" /></G>],
  ["linear-gradient(#90ee76,#57c944)", <G>{[[11, 37], [21, 27], [31, 8], [41, 19]].map(([x, y]) => <rect key={x} x={x} y={y} width="7" height={49 - y} rx="2" fill="#f2f8f0" />)}</G>],
  ["linear-gradient(#f4b047,#ee8b35)", <G><path d="M46 10C50 11 48 16 45 21L20 42L11 49L14 40L38 14C41 11 44 9 46 10Z" fill="#fff" /><path d="M12 49H49" stroke="#fbe2c0" strokeWidth="2" /></G>],
  ["#3b82f6", <G><rect x="8" y="18" width="30" height="22" rx="5" fill="#fff" /><path d="M39 26L49 18.500V40L39 33Z" fill="#e6effd" /></G>],
  ["#fff", <G><g strokeWidth="8" strokeLinecap="round"><path d="M24 13V12.900" stroke="#5ec3ea" /><path d="M12 23H24" stroke="#5ec3ea" /><path d="M35 12V23" stroke="#54b689" /><path d="M46 23.500V23.400" stroke="#54b689" /><path d="M24 35V46" stroke="#d22f5e" /><path d="M12.500 35V34.900" stroke="#d22f5e" /><path d="M35 35H46" stroke="#e7b33f" /><path d="M35 46V45.900" stroke="#e7b33f" /></g></G>, 1],
  ["#1c1c1c", <G><rect x="1.500" y="1.500" width="55" height="55" rx="13" stroke="#a5a7aa" strokeWidth="3" /><rect x="4" y="4" width="50" height="50" rx="10" stroke="#000" strokeWidth="3" /><text x="9" y="22" fontFamily="DejaVu Sans Mono, monospace" fontSize="14" fontWeight="700" fill="#fff" letterSpacing="0">&gt;_</text></G>, 1],
  ["linear-gradient(#53b2f2,#2a62dc)", <G><AppStoreA /></G>],
  ["xcode"],
  ["linear-gradient(#dfe6ea,#8f8f8b)", <SystemGear />],
  ["anaconda"],
  ["linear-gradient(#e9edf3,#c4cfdc)", <Elephant />],
  ["#0f1615", <G><path d="M0 14H58M0 29H58M0 44H58M14 0V58M29 0V58M44 0V58" stroke="#24433f" /><path d="M6 30L11 33L13.500 35L15.500 9L18.500 40L20 33H27C29 31 30 27 31.500 27C33.500 27 34 33 37 33C39 33 39.500 30 41 30C42.500 30 43 33 47 33" stroke="#68c9ab" strokeWidth="1.600" /><rect x="1.500" y="1.500" width="55" height="55" rx="13" stroke="#a5a7aa" strokeWidth="3" /><rect x="4" y="4" width="50" height="50" rx="10" stroke="#000" strokeWidth="4" /></G>],
  ["linear-gradient(#e9edf3,#c4cfdc)", <Elephant />],
  ["linear-gradient(90deg,#7e2c2a,#a94443 8%,#a44241)", <G><text x="30" y="38" fontSize="31" fontFamily="Liberation Serif, serif" textAnchor="middle" fill="#f3e6e4" letterSpacing="0">Aa</text></G>],
  ["tableau"],
];
const XcodeIcon = () => (
  <Svg w={66} h={68} vb="0 0 66 68">
    <defs>
      <linearGradient id="xc" x1="0" x2="0" y1="0" y2="1"><stop stopColor="#4eb0ee" /><stop offset="1" stopColor="#2a5cd8" /></linearGradient>
      <linearGradient id="hh" x1="0" x2="1" y1="0" y2="1"><stop stopColor="#8c8f92" /><stop offset="0.500" stopColor="#3c3f42" /><stop offset="1" stopColor="#5a5d60" /></linearGradient>
    </defs>
    <rect x="2" y="5" width="58" height="58" rx="14" fill="url(#xc)" /><rect x="5" y="8" width="52" height="52" rx="11" stroke="#a5d2f7" strokeWidth="1.200" />
    <g transform="translate(2 7)"><AppStoreA c="#9fd0f7" w={4.5} /><AppStoreA c="#3a83e4" w={2.2} /><circle cx="29" cy="27" r="20" stroke="#6fb0f0" /></g>
    <path d="M51 14L42 30" stroke="#7c7f82" strokeWidth="6" /><path d="M42 29L26 62" stroke="#26282c" strokeWidth="8" strokeLinecap="round" />
    <path d="M35 3C44 -1 54 1 58 6L60 10L66 10L65 17L58 16L53 20L46 15C45 9 41 5 35 3Z" fill="url(#hh)" />
  </Svg>
);
const AnacondaIcon = () => (
  <Svg w={72} h={72}>
    <circle cx="36" cy="36" r="30.200" stroke="#62b044" strokeWidth="11.600" />
    <path d="M33 0L38 7L31 13M26 0L29 14M18 2L27 15M12 9L32 9M7 12L22 19M9 22L26 14M2 19L17 24M1 30L22 19M0 27L13 33M1 37L14 27M1 38L12 38M0 44L13 33M2 50L14 40M4 44L18 52M2 40L14 46M6 58L18 50M14 50L17 64" stroke="#985c66" strokeWidth="1.600" />
  </Svg>
);
const Trash = () => (
  <Svg w={54} h={68}>
    <path d="M3 13L10 4L16 9L22 1L30 7L37 2L43 8L50 12L48 20H6Z" fill="#e9e9ea" />
    <path d="M10 6L15 12L19 8ZM24 4L28 12L22 13ZM40 6L36 13L45 12Z" fill="#6d6a66" /><circle cx="33" cy="11" r="3" fill="#4d9a8b" />
    <path d="M1 15C10 20 44 20 53 15L47 62C46 69 8 69 7 62Z" fill="#d6d5d6" /><path d="M1 15C10 20 44 20 53 15" stroke="#f8f8f8" strokeWidth="2" />
    <path d="M14 24L20 60M27 22V62M40 24L34 60" stroke="#e3e3e4" strokeWidth="5" />
  </Svg>
);
const Dock = () => (
  <DockBar>
    {icons.map(([bg, art, running, badge], i) => {
      const big = bg === "tableau";
      const top = big ? 11 : bg === "xcode" ? 8 : bg === "anaconda" ? 6 : 13;
      return (
        <DockSlot key={i} $top={top}>
          {big ? <TableauTile /> : bg === "xcode" ? <XcodeIcon /> : bg === "anaconda" ? <AnacondaIcon /> : <Tile $bg={bg}>{art}</Tile>}
          {badge && <Badge>{badge}</Badge>}
          {running ? <RunningDot $mt={big ? 7 : 9} /> : null}
        </DockSlot>
      );
    })}
    <DockDivider />
    <TrashSlot><Trash /></TrashSlot>
  </DockBar>
);

const menus = [["File", 83], ["Data", 98], ["Worksheet", 170], ["Dashboard", 172], ["Story", 106], ["Analysis", 140], ["Map", 93], ["Format", 127], ["Server", 120], ["Window", 138], ["Help", 60]];
const sheets = [["Sheet 1", 114, false, -0.1], ["Number of Rides", 219, true], ["Customers", 152, false, -0.15], ["Top Starting Locations", 284, false, -0.25], ["Top Ending Locations", 270], ["Gender Breakdown", 244], ["Average Trip Duration.", 278, false, -0.38], ["Bike Repairs.", 174, false, -0.25], ["Bike Utilization", 198, false, -0.05]];

export default function App() {
  return (
    <Desktop>
      <GlobalStyle />
      <MenuBar>
        <AppleSlot><FaApple /></AppleSlot>
        <MenuItem $bold $w={228}>Tableau Public</MenuItem>
        {menus.map(([m, w]) => <MenuItem key={m} $w={w}>{m}</MenuItem>)}
        <MenuExtras>
          <Extra $w={89}><Svg w={52} h={24}><rect x="1" y="1" width="44" height="22" rx="7" stroke="#b59f9c" strokeWidth="2" /><rect x="4" y="4" width="20" height="16" rx="4" fill="#f0ebea" /><path d="M48 8C51 9 51 15 48 16Z" fill="#b59f9c" /></Svg></Extra>
          <Extra $w={74}><Svg w={34} h={26}><path d="M2 9C10 1 24 1 32 9M7.500 15C13 10 21 10 26.500 15" stroke="#f0ebea" strokeWidth="4.500" /><path d="M17 25L11 19C14 16 20 16 23 19Z" fill="#f0ebea" /></Svg></Extra>
          <Extra $w={63}><Svg w={26} h={26} stroke="#f0ebea" strokeWidth="2.800"><circle cx="10.500" cy="10.500" r="9" /><path d="M17 17L24.500 25" strokeWidth="3.400" /></Svg></Extra>
          <Extra $w={61}><Svg w={29} h={28}><rect x="1.200" y="1.200" width="26.600" height="11" rx="5.500" stroke="#f0ebea" strokeWidth="2.400" /><circle cx="7" cy="6.700" r="3.200" fill="#f0ebea" /><rect y="15" width="29" height="13" rx="6.500" fill="#f0ebea" /><circle cx="22.500" cy="21.500" r="4" fill="#562628" /></Svg></Extra>
          <Extra $w={61}><Svg w={28} h={28}>
            <defs>
              <linearGradient id="siri" x1="0" y1="0.200" x2="1" y2="0.800"><stop stopColor="#a03a5c" /><stop offset="0.500" stopColor="#3f4468" /><stop offset="1" stopColor="#2f62b0" /></linearGradient>
              <radialGradient id="glow"><stop stopColor="#fff" /><stop offset="0.350" stopColor="#d8dcf5" stopOpacity="0.800" /><stop offset="1" stopColor="#7f9be0" stopOpacity="0" /></radialGradient>
            </defs>
            <circle cx="14" cy="14" r="14" fill="url(#siri)" /><path d="M7 5C13 0 23 4 25 12C20 8 12 10 7 5Z" fill="#2c8a6e" opacity="0.800" /><path d="M4 18C11 26 21 26 25 18C19 22 10 22 4 18Z" fill="#3479cc" opacity="0.900" /><path d="M2 12C4 17 8 18 13 15C9 14 7 9 2 12Z" fill="#d8496f" /><circle cx="15" cy="14" r="8" fill="url(#glow)" /></Svg></Extra>
          <Clock>{"Mon Jan 30  2:47 PM"}</Clock>
        </MenuExtras>
      </MenuBar>

      <Window>
        <TitleBar>
          <Light $c="#ec695e" /><Light $c="#f4bf4f" /><Light $c="#61c554" />
          <WindowTitle>Tableau Public - project 1</WindowTitle>
        </TitleBar>

        <Toolbar>
          <ToolGroup $w={96}><Tool $gap={32}><TableauMark /></Tool></ToolGroup>
          <ToolGroup $w={364}>
            <Tool $gap={27}><Arrow c="#555" /></Tool>
            <Tool $gap={29}><Arrow c={dimGrey} flip /></Tool>
            <Tool $gap={24}><Cycle /></Tool>
            <Tool $gap={15}><Caret w={11} h={7} /></Tool>
            <Tool $gap={22}><Save /></Tool>
            <Tool $gap={34}><AddData /></Tool>
          </ToolGroup>
          <ToolGroup $w={252}>
            <Tool $gap={20}><SheetGlyph mark="add" /></Tool>
            <Tool $gap={17}><Caret w={11} h={7} /></Tool>
            <Tool $gap={20}><Duplicate /></Tool>
            <Tool $gap={23}><SheetGlyph mark="clear" /></Tool>
            <Tool $gap={17}><Caret w={11} h={7} /></Tool>
          </ToolGroup>
          <ToolGroup $w={220}>
            <Tool $gap={25}><Swap /></Tool>
            <Tool $gap={29}><SortGlyph widths={[9, 16, 23]} /></Tool>
            <Tool $gap={27}><SortGlyph widths={[23, 16, 9]} /></Tool>
          </ToolGroup>
          <ToolGroup $w={544}>
            <Tool $gap={33}><Highlighter /></Tool>
            <Tool $gap={16}><Caret w={11} h={7} /></Tool>
            <Tool $gap={25}><Clip /></Tool>
            <Tool $gap={20}><Caret w={11} h={7} c={dimGrey} /></Tool>
            <Tool $gap={22}><LabelBox /></Tool>
            <Tool $gap={33}><Pin /></Tool>
            <FitSelect><SelectLabel>Standard</SelectLabel><SelectArrow><Caret w={13} h={8} /></SelectArrow></FitSelect>
          </ToolGroup>
          <ToolGroup $w={172}>
            <Tool $gap={24}><ShowCards /></Tool>
            <Tool $gap={10}><Caret w={11} h={7} /></Tool>
            <Tool $gap={23}><Present /></Tool>
          </ToolGroup>
        </Toolbar>

        <Body>
          <Sidebar>
            <PaneTabs>
              <DataTab>Data</DataTab>
              <AnalyticsTab>Analytics<Svg w={13} h={26}><path d="M12 3L2 12L12 21" stroke="#555" strokeWidth="2" /></Svg></AnalyticsTab>
            </PaneTabs>
            <SourceRow><SourceGlyph />201908-citibike-tripdata</SourceRow>
            <SearchRow>
              <SearchBox>Search<Svg w={20} h={20}><circle cx="12.500" cy="7.500" r="6.500" stroke="#666" strokeWidth="2" /><path d="M8 12L1 19" stroke="#666" strokeWidth="2" /></Svg></SearchBox>
              <Tool $gap={8}><Svg w={26} h={26}><path d="M1 2H25L15.500 14V21L10.500 25V14Z" stroke="#666" strokeWidth="2" /></Svg></Tool>
              <SearchDivider />
              <Svg w={25} h={19} stroke="#666" strokeWidth="2"><path d="M0 1H25M0 5.200H25M0 9.400H25M0 13.600H25M0 17.800H25" strokeDasharray="4 3 8 2 8" /></Svg>
              <Tool $gap={18}><Caret w={15} h={9} /></Tool>
            </SearchRow>
            <TablesHeading>Tables</TablesHeading>
            <Fields items={dimensions} />
            <FieldDivider />
            <Fields items={measures} />
          </Sidebar>

          <CardColumn>
            <ShelfCard $h={124}>Pages</ShelfCard>
            <ShelfCard $h={156}>Filters</ShelfCard>
            <ShelfCard $h={436}>
              Marks
              <MarkType>
                <SelectLabel $pad={23}><TextGlyph w={22} h={19} c="#777" />Automatic</SelectLabel>
                <SelectArrow><Caret w={14} h={8} /></SelectArrow>
              </MarkType>
              <MarkGrid>
                <MarkButton><Svg w={36} h={32}><circle cx="11" cy="9" r="5.800" fill="#826c98" /><circle cx="25" cy="9" r="5.800" fill="#fb6f81" /><circle cx="11" cy="23" r="5.800" fill="#f4a57a" /><circle cx="25" cy="23" r="5.800" fill="#82a5cc" /></Svg>Color</MarkButton>
                <MarkButton><Svg w={32} h={32} stroke={iconGrey} strokeWidth="2"><path d="M7.500 13A12 12 0 1 1 15 26" /><circle cx="9.500" cy="21.500" r="7" /></Svg>Size</MarkButton>
                <MarkButton><Svg w={28} h={32}><svg y="3"><TextGlyph /></svg></Svg>Text</MarkButton>
                <MarkButton><Svg w={34} h={32}><circle cx="17" cy="11" r="4.500" fill={iconGrey} /><g stroke={iconGrey} strokeWidth="2"><circle cx="5.500" cy="23.500" r="3.600" /><circle cx="17" cy="23.500" r="3.600" /><circle cx="28.500" cy="23.500" r="3.600" /></g></Svg>Detail</MarkButton>
                <MarkButton><Svg w={30} h={32} stroke={iconGrey} strokeWidth="2"><path d="M2 5H28V22H21V29L14 22H2Z" strokeLinejoin="round" /></Svg>Tooltip</MarkButton>
              </MarkGrid>
              <PillRow><TextGlyph /><Pill $w={222} $c="#00b180" $ls={0.3}>CNT(201908-..</Pill></PillRow>
            </ShelfCard>
          </CardColumn>

          <Sheet>
            <Shelf><ShelfLabel $pad={14} $gap={16}><Svg w={20} h={24}>{[0, 8, 16].map((x) => <path key={x} fill={iconGrey} d={`M${x} 0h4v3h-4zM${x} 5h4v19h-4z`} />)}</Svg>Columns</ShelfLabel></Shelf>
            <Shelf><ShelfLabel $pad={12} $gap={14}><Svg w={24} h={20}>{[0, 8, 16].map((y) => <path key={y} fill={iconGrey} d={`M0 ${y}h4v4h-4zM6 ${y}h18v4h-18z`} />)}</Svg>Rows</ShelfLabel></Shelf>
            <View>
              <ViewTitle>Number of Rides</ViewTitle>
              <MarkValue>2,344,224</MarkValue>
            </View>
          </Sheet>
        </Body>

        <SheetTabs>
          <SheetTab $w={262} $pad={20} $gap={11} $ls={-0.2}><Cylinder />Data Source</SheetTab>
          {sheets.map(([s, w, active, ls]) => <SheetTab key={s} $w={w} $active={active} $ls={ls}>{s}</SheetTab>)}
          <SheetTab $w={220} $pad={15}><DashGlyph />NYC Citi Bike.</SheetTab>
          <SheetTab $w={147} $pad={15} $ls={-0.1}><BookGlyph />Story 1</SheetTab>
          <SheetTab $w={63} $pad={18}><NewSheet /></SheetTab>
          <SheetTab $w={64} $pad={20}><NewDash /></SheetTab>
          <SheetTab $w={64} $pad={19}><NewStory /></SheetTab>
        </SheetTabs>
        <StatusBar>
          <StatusText $gap={25}>1 mark</StatusText>
          <StatusText $gap={36}>1 row by 1 column</StatusText>
          <StatusText $gap={34}>SUM of CNT(201908-citibike-tripdata.csv): 2,344,224</StatusText>
          <StatusCell $push $w={254} $pad={11} $gap={20}>
            <Svg w={21} h={27} stroke="#666" strokeWidth="2"><circle cx="10.500" cy="6" r="5" /><path d="M1 26V20C1 13 20 13 20 20V26Z" /></Svg>
            <UserName>Shah Khan</UserName>
            <Caret w={13} h={7} c="#000" />
          </StatusCell>
          <StatusCell $w={54} /><StatusCell $w={54} /><StatusCell $w={94} />
          <StatusCell $w={142} $pad={16}>
            <Svg w={108} h={16}><path d="M0 0H2V16H0ZM11 0V16L3 8ZM42 0V16L34 8ZM66 0V16L74 8ZM95 0V16L103 8ZM105 0H107V16H105Z" fill="#a6a6a6" /></Svg>
          </StatusCell>
          <StatusCell $w={153} $pad={16} $gap={20}>
            <Svg w={22} h={22}>{[0, 8, 16].map((y) => [0, 8, 16].map((x) => <rect key={x + "-" + y} x={x} y={y} width="6" height="6" fill="#a6a6a6" />))}</Svg>
            <Svg w={22} h={22}><rect width="22" height="14" fill="#a6a6a6" />{[0, 8, 16].map((x) => <rect key={x} x={x} y="16" width="6" height="6" fill="#a6a6a6" />)}</Svg>
            <Svg w={22} h={22}><rect width="22" height="22" rx="1" fill="#606060" /></Svg>
          </StatusCell>
        </StatusBar>

        <ShowMe>
          <ShowMeTab>
            <Svg w={32} h={30}><rect width="25" height="6" fill="#85709a" /><rect y="8" width="32" height="6" fill="#82a5cc" /><rect y="16" width="13" height="6" fill="#f4a57a" /><rect y="24" width="19" height="6" fill="#fb7383" /></Svg>
            Show Me
          </ShowMeTab>
          <ShowMeBody>
            <ThumbGrid>
              {thumbs.map(([x, y, art], i) => {
                const sel = i === 6;
                const b = sel ? 12 : 6;
                return (
                  <Thumb key={i} $selected={sel}>
                    <Svg w={sel ? 104 : 108} h={sel ? 76 : 80} vb={`${x + b} ${y + b} ${336 - 2 * b} ${252 - 2 * b}`}>{art}</Svg>
                  </Thumb>
                );
              })}
            </ThumbGrid>
            <Hint>For <b>horizontal bars</b> try</Hint>
            <HintRow><HintText>0 or more</HintText><Pill $w={178} $c="#4996b2" $ls={-0.35}>Dimensions</Pill></HintRow>
            <HintRow><HintText>1 or more</HintText><Pill $w={154} $c="#00b180" $ls={-0.35}>Measures</Pill></HintRow>
          </ShowMeBody>
        </ShowMe>
      </Window>

      <Dock />
    </Desktop>
  );
}
